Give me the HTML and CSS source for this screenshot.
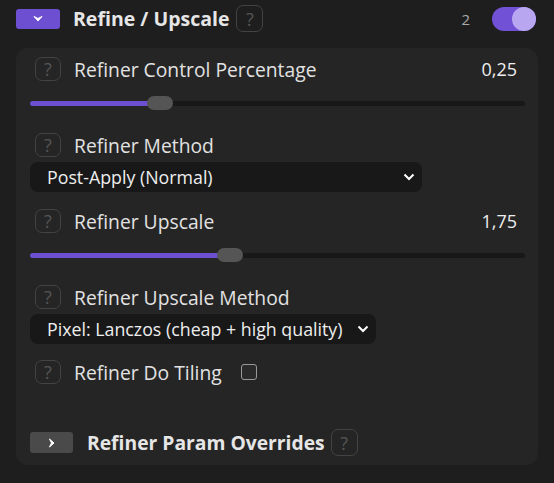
FILE: index.html
```html
<!DOCTYPE html>
<html>
<head>
<meta charset="utf-8">
<link rel="stylesheet" href="styles.css">
</head>
<body>
<div class="header">
  <div class="collapse-btn open">
    <svg width="10" height="8" viewBox="0 0 10 8"><path d="M1 1.5 L5 6 L9 1.5 L5 3.5 Z" fill="#fff" stroke="#fff" stroke-width="1" stroke-linejoin="round"/></svg>
  </div>
  <span class="title">Refine / Upscale</span>
  <span class="help big">?</span>
  <span class="count">2</span>
  <div class="toggle"><div class="knob"></div></div>
</div>
<div class="panel">
  <div class="param">
    <div class="label-row">
      <span class="help">?</span>
      <span class="label">Refiner Control Percentage</span>
      <span class="value">0,25</span>
    </div>
    <div class="slider"><div class="fill" style="width:126px"></div><div class="thumb" style="left:117px"></div></div>
  </div>
  <div class="param">
    <div class="label-row">
      <span class="help">?</span>
      <span class="label">Refiner Method</span>
    </div>
    <div class="select wide"><span>Post-Apply (Normal)</span><svg class="chev" width="12" height="8" viewBox="0 0 12 8"><path d="M1.5 1.5 L6 6 L10.5 1.5" fill="none" stroke="#fff" stroke-width="2"/></svg></div>
  </div>
  <div class="param">
    <div class="label-row">
      <span class="help">?</span>
      <span class="label">Refiner Upscale</span>
      <span class="value">1,75</span>
    </div>
    <div class="slider"><div class="fill" style="width:196px"></div><div class="thumb" style="left:187px"></div></div>
  </div>
  <div class="param">
    <div class="label-row">
      <span class="help">?</span>
      <span class="label">Refiner Upscale Method</span>
    </div>
    <div class="select narrow"><span>Pixel: Lanczos (cheap + high quality)</span><svg class="chev" width="12" height="8" viewBox="0 0 12 8"><path d="M1.5 1.5 L6 6 L10.5 1.5" fill="none" stroke="#fff" stroke-width="2"/></svg></div>
  </div>
  <div class="param">
    <div class="label-row">
      <span class="help">?</span>
      <span class="label">Refiner Do Tiling</span>
      <span class="checkbox"></span>
    </div>
  </div>
  <div class="sub-header">
    <div class="collapse-btn closed">
      <svg width="8" height="10" viewBox="0 0 8 10"><path d="M1.5 1 L6 5 L1.5 9 L3.5 5 Z" fill="#fff" stroke="#fff" stroke-width="1" stroke-linejoin="round"/></svg>
    </div>
    <span class="title sub">Refiner Param Overrides</span>
    <span class="help big sub-help">?</span>
  </div>
</div>
</body>
</html>
```
FILE: styles.css
```css
html, body {
  margin: 0;
  padding: 0;
  background: #1e1e1e;
  font-family: "Open Sans", "Liberation Sans", sans-serif;
  color: #e4e4e4;
  width: 554px;
  height: 483px;
  overflow: hidden;
}
.header {
  display: flex;
  align-items: center;
  height: 37px;
  padding-left: 16px;
}
.collapse-btn {
  display: flex;
  align-items: center;
  justify-content: center;
  width: 44px;
  height: 20px;
  border-radius: 3px;
  flex: none;
}
.collapse-btn.open { background: #6d4fd1; }
.collapse-btn.closed { background: #4a4a4a; width: 43px; height: 21px; }
.title {
  font-weight: bold;
  font-size: 19.5px;
  margin-left: 13px;
  color: #e6e6e6;
  white-space: nowrap;
}
.help {
  display: inline-flex;
  align-items: center;
  justify-content: center;
  box-sizing: border-box;
  width: 26px;
  height: 24px;
  border: 1px solid #434343;
  border-radius: 7px;
  color: #555;
  font-size: 18px;
  line-height: 1;
  flex: none;
}
.help.big { width: 27px; height: 27px; margin-left: 7px; }
.help.sub-help { margin-left: 6px; }
.count {
  margin-left: auto;
  font-size: 15px;
  color: #aaa;
}
.toggle {
  position: relative;
  width: 44px;
  height: 24px;
  border-radius: 12px;
  background: #7152d6;
  margin-left: 22px;
  margin-right: 18px;
}
.knob {
  position: absolute;
  right: 0;
  top: 0;
  width: 24px;
  height: 24px;
  border-radius: 50%;
  background: #b9a6f0;
}
.panel {
  margin: 11px 0 0 16px;
  width: 522px;
  height: 417px;
  box-sizing: border-box;
  background: #252525;
  border-radius: 12px;
  padding: 9px 12px 0 14px;
  display: flex;
  flex-direction: column;
}
.label-row {
  display: flex;
  align-items: center;
  height: 24px;
  padding-left: 5px;
  white-space: nowrap;
}
.label {
  font-size: 19.3px;
  margin-left: 13px;
  color: #e2e2e2;
}
.value {
  margin-left: auto;
  font-size: 18px;
  margin-right: 9px;
  color: #eee;
}
.slider {
  position: relative;
  height: 5px;
  border-radius: 3px;
  background: #181818;
  margin-top: 20px;
  width: 495px;
}
.fill {
  height: 100%;
  border-radius: 3px;
  background: #6d4fd1;
}
.thumb {
  position: absolute;
  top: -5px;
  width: 26px;
  height: 14px;
  border-radius: 7px;
  background: #555;
}
.param:nth-child(2) { margin-top: 27px; }
.param:nth-child(3) { margin-top: 17px; }
.param:nth-child(4) { margin-top: 27px; }
.param:nth-child(5) { margin-top: 16px; }
.select {
  display: flex;
  align-items: center;
  height: 30px;
  border-radius: 8px;
  background: #181818;
  margin-top: 5px;
  padding-left: 17px;
  box-sizing: border-box;
  font-size: 17.8px;
  color: #eee;
  white-space: nowrap;
}
.select.wide { width: 392px; }
.select.narrow { width: 346px; }
.chev { margin-left: auto; margin-right: 7px; flex: none; }
.checkbox {
  width: 16px;
  height: 16px;
  box-sizing: border-box;
  border: 1.5px solid #999;
  border-radius: 3px;
  margin-left: 19px;
  background: #2a2a2a;
}
.sub-header {
  display: flex;
  align-items: center;
  margin-top: 45px;
}
.title.sub { margin-left: 14px; font-size: 19.3px; }
```
